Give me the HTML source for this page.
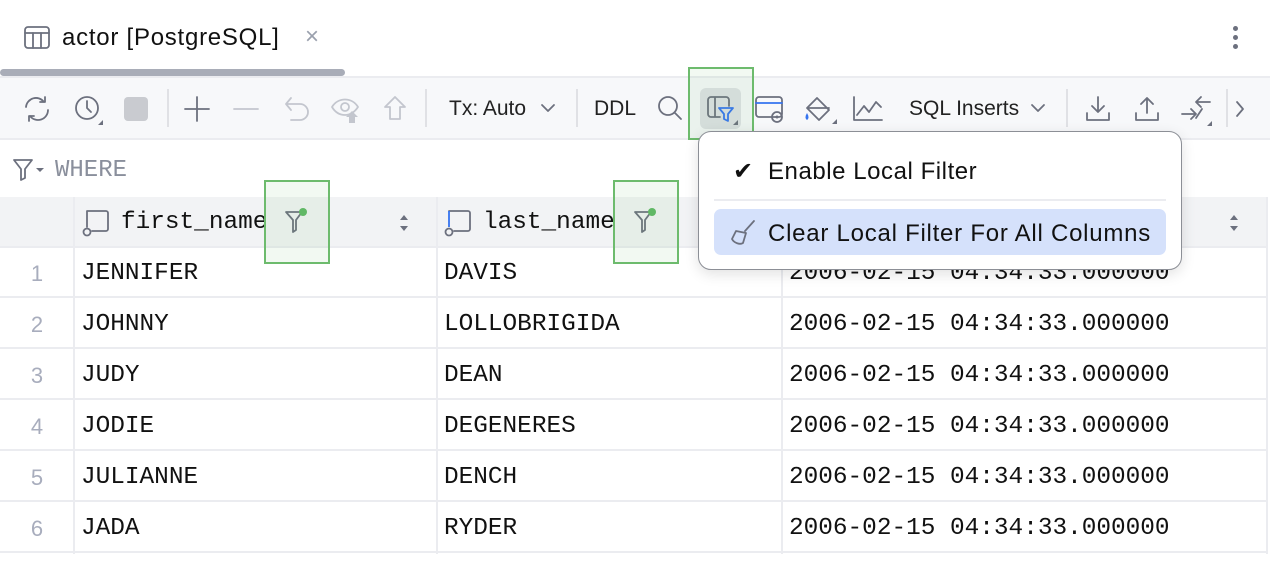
<!DOCTYPE html>
<html><head><style>
*{box-sizing:border-box;margin:0;padding:0}
body{width:1270px;height:565px;overflow:hidden;background:#fff;font-family:"Liberation Sans",sans-serif;position:relative;color:#111}
.a{position:absolute}
.mono{font-family:"Liberation Mono","DejaVu Sans Mono",monospace;font-size:24.4px;color:#111}
.ui{font-size:21px;color:#222}
.big{font-size:24px;letter-spacing:0.55px;color:#111}
svg{position:absolute;overflow:visible}
.ic{fill:none;stroke:#6c707e;stroke-width:1.8;stroke-linecap:round;stroke-linejoin:round}
.row{position:absolute;left:0;width:1268px;height:51px;border-bottom:2px solid #ebecf0}
.num{position:absolute;width:74px;text-align:center;font-family:"Liberation Sans",sans-serif;font-size:22px;color:#a8adbd;top:14px;padding-left:0}
.vl{position:absolute;top:197px;height:357px;width:2px;background:#ebecf0}
.gb{position:absolute;border:2.5px solid #6dbb6d;background:rgba(109,187,109,.09)}
</style></head><body>
<!-- tab -->
<svg style="left:24px;top:26px" width="26" height="24"><rect x="1" y="1" width="24" height="21" rx="3" class="ic" style="stroke:#6c707e"/><line x1="1" y1="7" x2="25" y2="7" class="ic"/><line x1="9" y1="7" x2="9" y2="22" class="ic"/><line x1="17" y1="7" x2="17" y2="22" class="ic"/></svg>
<div class="a big" style="left:62px;top:24px;letter-spacing:0.75px">actor [PostgreSQL]</div>
<div class="a" style="left:305px;top:23px;font-size:24px;color:#9aa0ad">×</div>
<div class="a" style="left:1233px;top:26px;width:5px;height:5px;border-radius:50%;background:#6c707e"></div>
<div class="a" style="left:1233px;top:35px;width:5px;height:5px;border-radius:50%;background:#6c707e"></div>
<div class="a" style="left:1233px;top:44px;width:5px;height:5px;border-radius:50%;background:#6c707e"></div>
<div class="a" style="left:0;top:69px;width:345px;height:7px;border-radius:4px;background:#a9adb8"></div>
<!-- toolbar -->
<div class="a" style="left:0;top:76px;width:1270px;height:64px;background:#f7f8fa;border-top:2px solid #ebecf0;border-bottom:2px solid #ebecf0"></div>
<svg style="left:22px;top:95px" width="30" height="28"><path class="ic" d="M4 12 A10 10 0 0 1 22 7 M26 15 A10 10 0 0 1 8 21 M18 7 h5 v-5 M12 21 h-5 v5"/></svg>
<svg style="left:73px;top:94px" width="32" height="32"><circle cx="14" cy="14" r="11" class="ic"/><path class="ic" d="M14 7 v7 l4 4"/><path d="M30 26 L30 31 L25 31Z" fill="#6c707e"/></svg>
<div class="a" style="left:124px;top:97px;width:24px;height:24px;border-radius:4px;background:#c9cbd0"></div>
<div class="a" style="left:167px;top:89px;width:2px;height:38px;background:#e0e1e5"></div>
<svg style="left:184px;top:96px" width="26" height="26"><path class="ic" d="M13 1 v24 M1 13 h24"/></svg>
<svg style="left:233px;top:96px" width="26" height="26"><path class="ic" style="stroke:#c3c6ce" d="M1 13 h24"/></svg>
<svg style="left:283px;top:95px" width="28" height="28"><path class="ic" style="stroke:#c3c6ce" d="M8 3 L3 9 L8 15 M3 9 H17 A8 8 0 0 1 17 25 H8"/></svg>
<svg style="left:330px;top:95px" width="34" height="30"><path class="ic" style="stroke:#c3c6ce" d="M2 12 C8 2 22 2 28 12 C24 18 20 20 15 20 C9 20 5 17 2 12Z"/><circle cx="15" cy="12" r="4" class="ic" style="stroke:#c3c6ce"/><path d="M22 16 l6 6 h-3 v6 h-6 v-6 h-3Z" fill="#c3c6ce"/></svg>
<svg style="left:382px;top:95px" width="26" height="28"><path class="ic" style="stroke:#c3c6ce" d="M13 2 L3 12 H8 V24 H18 V12 H23Z"/></svg>
<div class="a" style="left:425px;top:89px;width:2px;height:38px;background:#e0e1e5"></div>
<div class="a ui" style="left:449px;top:97px">Tx: Auto</div>
<svg style="left:540px;top:103px" width="16" height="10"><path class="ic" d="M2 2 l6 6 l6 -6"/></svg>
<div class="a" style="left:576px;top:89px;width:2px;height:38px;background:#e0e1e5"></div>
<div class="a ui" style="left:594px;top:97px">DDL</div>
<svg style="left:657px;top:95px" width="26" height="26"><circle cx="11" cy="11" r="9" class="ic"/><path class="ic" d="M18 18 l6 6"/></svg>
<div class="a" style="left:700px;top:88px;width:41px;height:41px;border-radius:6px;background:#dfe1e5"></div>
<svg style="left:706px;top:95px" width="32" height="30"><path class="ic" d="M14 22 H5 A3 3 0 0 1 2 19 V5 A3 3 0 0 1 5 2 H20 A3 3 0 0 1 23 5 V11 M9 2 V22"/><path d="M13 13 H27 L22 19 V26 L18 24 V19Z" fill="none" stroke="#3574f0" stroke-width="1.8" stroke-linejoin="round"/><path d="M32 25 L32 30 L27 30Z" fill="#6c707e"/></svg>
<svg style="left:755px;top:96px" width="32" height="30"><rect x="1" y="1" width="26" height="20" rx="3" class="ic"/><path class="ic" d="M1 7 H27" style="stroke:#3574f0"/><circle cx="22" cy="21" r="5" fill="#f7f8fa" class="ic"/><circle cx="22" cy="21" r="1.5" fill="#6c707e"/></svg>
<svg style="left:802px;top:93px" width="36" height="34"><path class="ic" d="M5 15 L15 5 L27 17 L17 27Z M5 15 H27"/><path d="M5 20 Q2 25 5 27 Q8 25 5 20Z" fill="#3574f0"/><path d="M35 26 L35 31 L30 31Z" fill="#6c707e"/></svg>
<svg style="left:852px;top:95px" width="32" height="28"><path class="ic" d="M2 2 V25 H30 M5 20 L12 11 L17 17 L24 7 L29 12"/></svg>
<div class="a ui" style="left:909px;top:97px">SQL Inserts</div>
<svg style="left:1030px;top:103px" width="16" height="10"><path class="ic" d="M2 2 l6 6 l6 -6"/></svg>
<div class="a" style="left:1066px;top:89px;width:2px;height:38px;background:#e0e1e5"></div>
<svg style="left:1085px;top:95px" width="26" height="28"><path class="ic" d="M13 2 V17 M7 11 L13 17 L19 11 M2 18 V25 H24 V18"/></svg>
<svg style="left:1134px;top:95px" width="26" height="28"><path class="ic" d="M13 18 V3 M7 9 L13 3 L19 9 M2 18 V25 H24 V18"/></svg>
<svg style="left:1180px;top:95px" width="36" height="32"><path class="ic" d="M2 19 H16 M11 14 L16 19 L11 24 M30 7 H16 M21 2 L16 7 L21 12 M16 23 L22 14"/><path d="M32 26 L32 31 L27 31Z" fill="#6c707e"/></svg>
<div class="a" style="left:1226px;top:89px;width:2px;height:38px;background:#e0e1e5"></div>
<svg style="left:1235px;top:100px" width="12" height="18"><path class="ic" d="M2 2 l6 7 l-6 7"/></svg>
<!-- where -->
<svg style="left:12px;top:158px" width="32" height="24"><path class="ic" d="M2 2 H20 L13 11 V20 L9 22 V11Z"/><path d="M24 10 H32 L28 14Z" fill="#6c707e"/></svg>
<div class="a mono" style="left:55px;top:157px;color:#8a8f9c;font-size:24px">WHERE</div>
<!-- header -->
<div class="a" style="left:0;top:197px;width:1268px;height:51px;background:#f2f3f5;border-bottom:2px solid #ebecf0"></div>
<svg style="left:82px;top:210px" width="30" height="28"><path class="ic" d="M5 1 H24 A2 2 0 0 1 26 3 V19 A2 2 0 0 1 24 21 H10 M5 1 V17"/><circle cx="5" cy="22" r="3.5" class="ic"/></svg>
<div class="a mono" style="left:121px;top:209px">first_name</div>
<svg style="left:284px;top:208px" width="26" height="26"><path class="ic" d="M2 4 H18 L12 12 V22 L9 24 V12Z"/><circle cx="19" cy="4" r="4" fill="#5fb865"/></svg>
<svg style="left:398px;top:214px" width="12" height="18"><path d="M6 1 L10 6 H2Z M6 17 L10 12 H2Z" fill="#6c707e"/></svg>
<svg style="left:444px;top:210px" width="30" height="28"><path class="ic" d="M5 1 H24 A2 2 0 0 1 26 3 V19 A2 2 0 0 1 24 21 H10"/><path d="M5 1 V17" stroke="#3574f0" stroke-width="1.8" fill="none"/><circle cx="5" cy="22" r="3.5" class="ic"/></svg>
<div class="a mono" style="left:483px;top:209px">last_name</div>
<svg style="left:633px;top:208px" width="26" height="26"><path class="ic" d="M2 4 H18 L12 12 V22 L9 24 V12Z"/><circle cx="19" cy="4" r="4" fill="#5fb865"/></svg>
<svg style="left:1228px;top:214px" width="12" height="18"><path d="M6 1 L10 6 H2Z M6 17 L10 12 H2Z" fill="#6c707e"/></svg>
<!-- rows -->
<div class="row" style="top:247px"><div class="num">1</div><div class="a mono" style="left:81px;top:13px">JENNIFER</div><div class="a mono" style="left:444px;top:13px">DAVIS</div><div class="a mono" style="left:789px;top:13px">2006-02-15 04:34:33.000000</div></div>
<div class="row" style="top:298px"><div class="num">2</div><div class="a mono" style="left:81px;top:13px">JOHNNY</div><div class="a mono" style="left:444px;top:13px">LOLLOBRIGIDA</div><div class="a mono" style="left:789px;top:13px">2006-02-15 04:34:33.000000</div></div>
<div class="row" style="top:349px"><div class="num">3</div><div class="a mono" style="left:81px;top:13px">JUDY</div><div class="a mono" style="left:444px;top:13px">DEAN</div><div class="a mono" style="left:789px;top:13px">2006-02-15 04:34:33.000000</div></div>
<div class="row" style="top:400px"><div class="num">4</div><div class="a mono" style="left:81px;top:13px">JODIE</div><div class="a mono" style="left:444px;top:13px">DEGENERES</div><div class="a mono" style="left:789px;top:13px">2006-02-15 04:34:33.000000</div></div>
<div class="row" style="top:451px"><div class="num">5</div><div class="a mono" style="left:81px;top:13px">JULIANNE</div><div class="a mono" style="left:444px;top:13px">DENCH</div><div class="a mono" style="left:789px;top:13px">2006-02-15 04:34:33.000000</div></div>
<div class="row" style="top:502px"><div class="num">6</div><div class="a mono" style="left:81px;top:13px">JADA</div><div class="a mono" style="left:444px;top:13px">RYDER</div><div class="a mono" style="left:789px;top:13px">2006-02-15 04:34:33.000000</div></div>
<div class="vl" style="left:73px"></div>
<div class="vl" style="left:436px"></div>
<div class="vl" style="left:781px"></div>
<div class="vl" style="left:1266px"></div>
<!-- green boxes -->
<div class="gb" style="left:688px;top:67px;width:66px;height:73px"></div>
<div class="gb" style="left:264px;top:180px;width:66px;height:84px"></div>
<div class="gb" style="left:613px;top:180px;width:66px;height:84px"></div>
<!-- popup -->
<div class="a" style="left:698px;top:131px;width:484px;height:139px;background:#fff;border:1.5px solid #8c8f96;border-radius:13px;box-shadow:0 4px 14px rgba(0,0,0,.12)"></div>
<div class="a" style="left:733px;top:157px;font-size:24px;color:#111">✔</div>
<div class="a big" style="left:768px;top:158px">Enable Local Filter</div>
<div class="a" style="left:714px;top:199px;width:452px;height:2px;background:#ebecf0"></div>
<div class="a" style="left:714px;top:209px;width:452px;height:46px;border-radius:7px;background:#d5e1fb"></div>
<svg style="left:730px;top:219px" width="28" height="28"><path class="ic" d="M24 2 L15 12 M6 12 L16 14 L13 24 C10 26 4 24 2 20 Z"/></svg>
<div class="a big" style="left:768px;top:220px;letter-spacing:0.75px">Clear Local Filter For All Columns</div>
</body></html>
